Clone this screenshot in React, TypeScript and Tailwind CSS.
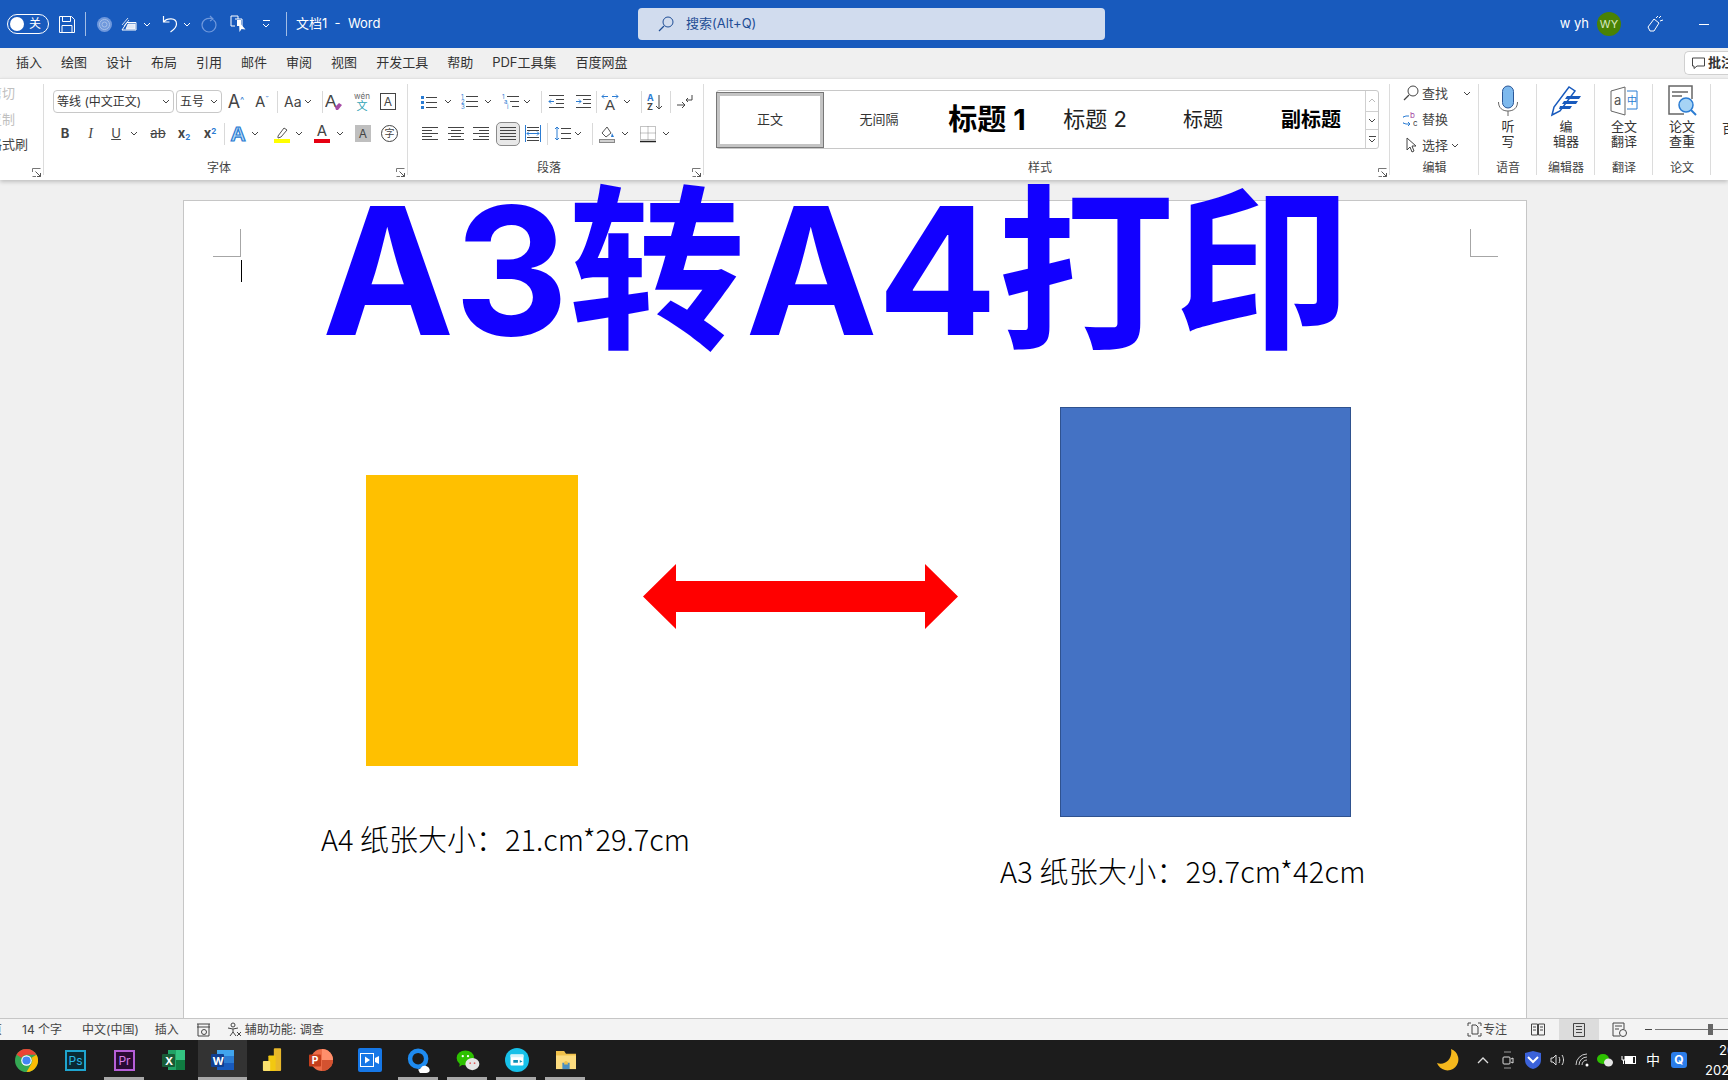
import React from "react";

const Chev = ({ c = "#444" }: { c?: string }) => (
  <svg width="8" height="5" viewBox="0 0 8 5" fill="none">
    <path d="M1 1l3 3 3-3" stroke={c} strokeWidth="1" />
  </svg>
);

const Sep = () => <div className="w-px h-[22px] bg-[#d9d9d9] shrink-0" />;

const Launcher = () => (
  <svg className="absolute right-[3px] bottom-[3px]" width="9" height="9" viewBox="0 0 9 9" fill="none">
    <path d="M.5 4V.5H8.5M.5 8.5H4" stroke="#777" />
    <path d="M3.5 3.5l5 5M8.5 5v3.5H5" stroke="#555" />
  </svg>
);

// one ribbon group: body, caption, and the thin divider on the right
const Group = ({ className, label, launcher, children }: { className: string; label?: string; launcher?: boolean; children: React.ReactNode }) => (
  <div className={`relative h-full shrink-0 flex flex-col ${className}`}>
    <div className="flex-1 min-h-0">{children}</div>
    <div className={`h-[23px] text-center text-[12px] leading-[22px] text-[#444] ${launcher ? "pr-[14px]" : ""}`}>{label}</div>
    {launcher && <Launcher />}
    <div className="absolute right-0 top-[5px] bottom-[5px] w-px bg-[#dcdcdc]" />
  </div>
);

const Lines = ({ x = 0, w = 14, ys, c = "#444" }: { x?: number; w?: number; ys: number[]; c?: string }) => (
  <>
    {ys.map((y) => (
      <path key={y} d={`M${x} ${y + 0.5}h${w}`} stroke={c} />
    ))}
  </>
);

const Ic = ({ children }: { children: React.ReactNode }) => (
  <svg className="shrink-0" width="18" height="18" viewBox="0 0 18 18" fill="none">
    {children}
  </svg>
);

const Align = ({ mode }: { mode: "l" | "c" | "r" | "j" }) => (
  <Ic>
    {[3, 6, 9, 12, 15].map((y, i) => {
      const short = i % 2 === 1 ? 10 : 16;
      const w = mode === "j" ? 16 : short;
      const x = mode === "r" ? 17 - w : mode === "c" ? 9 - w / 2 : 1;
      return <path key={y} d={`M${x} ${y - 0.5}h${w}`} stroke="#444" />;
    })}
  </Ic>
);

const Dropdown = ({ className, text }: { className: string; text: string }) => (
  <div className={`h-[23px] px-[3px] flex items-center justify-between border border-[#c8c8c8] rounded-[4px] text-[12px] text-[#333] bg-white shrink-0 ${className}`}>
    <span className="whitespace-nowrap">{text}</span>
    <Chev />
  </div>
);

const FontGroup = () => (
  <Group className="w-[364px]" label="字体" launcher>
    <div className="pl-[9px] pt-[11px] flex items-center h-[34px] text-[#444]">
      <Dropdown className="w-[121px]" text="等线 (中文正文)" />
      <div className="w-[2px]" />
      <Dropdown className="w-[46px]" text="五号" />
      <div className="w-[26px] ml-px text-center text-[18px] leading-none">A<sup className="text-[9px] text-[#2b7cd3]">^</sup></div>
      <div className="w-[26px] text-center text-[15px] leading-none">A<sup className="text-[9px] text-[#2b7cd3]">ˇ</sup></div>
      <div className="ml-[2px]"><Sep /></div>
      <div className="w-[24px] pl-[6px] text-[14px] whitespace-nowrap">Aa</div>
      <div className="w-[12px] flex justify-center"><Chev /></div>
      <div className="w-[8px]" />
      <Sep />
      <div className="w-[21px] flex justify-center">
        <Ic>
          <text x="0" y="14" fontSize="17" fill="#444" fontFamily="Liberation Sans">A</text>
          <path d="M10 14l4-4 3 2-4 5h-2z" fill="#a64ca6" />
        </Ic>
      </div>
      <div className="w-[36px] flex flex-col items-center text-[8px] leading-[9px] text-[#2ea3b5]">
        <span className="text-[#666]">wén</span>
        <span className="text-[11px] leading-[11px]">文</span>
      </div>
      <div className="w-[16px] h-[17px] border border-[#444] text-[12px] leading-[15px] text-center">A</div>
    </div>
    <div className="pl-[8px] pt-[7px] flex items-center h-[34px] text-[#444]">
      <div className="w-[26px] text-center text-[13px] font-bold">B</div>
      <div className="w-[25px] text-center text-[14px] italic font-['Liberation_Serif']">I</div>
      <div className="w-[26px] text-center text-[13px] underline">U</div>
      <div className="w-[10px] flex justify-center"><Chev /></div>
      <div className="w-[26px] ml-[6px] text-center text-[13px] line-through">ab</div>
      <div className="w-[26px] text-center text-[13px] font-bold">x<sub className="text-[8px] text-[#2b7cd3]">2</sub></div>
      <div className="w-[26px] text-center text-[13px] font-bold">x<sup className="text-[8px] text-[#2b7cd3]">2</sup></div>
      <div className="ml-px w-px h-[22px] bg-[#d9d9d9]" />
      <svg className="shrink-0" width="26" height="22" viewBox="0 0 26 22">
        <text x="13" y="18" textAnchor="middle" fontSize="21" fontWeight="700" fill="#bcdcf5" stroke="#2b7cd3" strokeWidth="1.200" fontFamily="Liberation Sans">A</text>
      </svg>
      <Chev />
      <div className="w-[18px] ml-[14px] shrink-0">
        <Ic>
          <path d="M5 11l6-8 3 2-6 7-3 1z" stroke="#555" />
          <rect x="1" y="14" width="16" height="4" fill="#ffff00" />
        </Ic>
      </div>
      <div className="w-[16px] flex justify-center"><Chev /></div>
      <div className="w-[16px] ml-[7px] flex flex-col items-center text-[15px] leading-[13px]">
        A
        <div className="w-[16px] h-[4px] mt-[2px] bg-[#e60012]" />
      </div>
      <div className="ml-[6px]"><Chev /></div>
      <div className="w-[16px] h-[17px] ml-[11px] bg-[#bfbfbf] text-[12px] leading-[17px] text-center">A</div>
      <div className="w-[17px] h-[17px] ml-[10px] rounded-full border border-[#444] text-[10px] leading-[15px] text-center">字</div>
    </div>
  </Group>
);

const ParagraphGroup = () => (
  <Group className="w-[296px]" label="段落" launcher>
    <div className="pl-[12px] pt-[11px] flex items-center h-[34px]">
      <Ic>
        <path d="M1 3h3v3H1zM1 8h3v3H1zM1 13h3v3H1z" fill="#2b7cd3" />
        <Lines x={6} w={11} ys={[4, 9, 14]} />
      </Ic>
      <div className="w-[20px] flex justify-center"><Chev /></div>
      <div className="ml-[3px]">
        <Ic>
          <text x="0" y="6" fontSize="6" fill="#2b7cd3">1</text>
          <text x="0" y="11" fontSize="6" fill="#2b7cd3">2</text>
          <text x="0" y="16" fontSize="6" fill="#2b7cd3">3</text>
          <Lines x={5} w={12} ys={[3, 8, 13]} />
        </Ic>
      </div>
      <div className="w-[18px] flex justify-center"><Chev /></div>
      <div className="ml-[5px]">
        <Ic>
          <text x="0" y="6" fontSize="6" fill="#2b7cd3">1</text>
          <text x="2" y="11" fontSize="6" fill="#2b7cd3">a</text>
          <text x="5" y="16" fontSize="6" fill="#2b7cd3">i</text>
          <path d="M5 3.500h12M8 8.500h9M10 13.500h7" stroke="#444" />
        </Ic>
      </div>
      <div className="w-[14px] flex justify-center"><Chev /></div>
      <div className="ml-[7px]"><Sep /></div>
      <div className="ml-[5px]">
        <Ic>
          <path d="M2 2.500h15M9 6.500h8M9 10.500h8M2 14.500h15" stroke="#444" />
          <path d="M7 8.500H2m2-2l-2 2 2 2" stroke="#2b7cd3" />
        </Ic>
      </div>
      <div className="ml-[9px]">
        <Ic>
          <path d="M2 2.500h15M9 6.500h8M9 10.500h8M2 14.500h15" stroke="#444" />
          <path d="M2 8.500h5m-2-2l2 2-2 2" stroke="#2b7cd3" />
        </Ic>
      </div>
      <div className="ml-[4px]"><Sep /></div>
      <div className="ml-[4px]">
        <Ic>
          <text x="9" y="17" textAnchor="middle" fontSize="15" fill="#444" fontFamily="Liberation Sans">A</text>
          <path d="M1 3.500h6M3 1.500l-2 2 2 2M11 3.500h6M15 1.500l2 2-2 2" stroke="#2b7cd3" />
        </Ic>
      </div>
      <div className="w-[16px] flex justify-center"><Chev /></div>
      <div className="ml-[6px]"><Sep /></div>
      <div className="ml-[4px]">
        <Ic>
          <text x="1" y="8" fontSize="9" fill="#2b7cd3" fontWeight="700">A</text>
          <text x="1" y="17" fontSize="9" fill="#444" fontWeight="700">Z</text>
          <path d="M13 2v14m-3-3l3 3 3-3" stroke="#444" />
        </Ic>
      </div>
      <div className="ml-[6px]"><Sep /></div>
      <div className="ml-[5px]">
        <Ic>
          <path d="M1 12h8m-3-3l3 3-3 3" stroke="#444" />
          <path d="M16 2v5H10m2-2l-2 2 2 2" stroke="#444" />
        </Ic>
      </div>
    </div>
    <div className="pl-[13px] pt-[7px] flex items-center h-[34px]">
      <Align mode="l" />
      <div className="ml-[8px]"><Align mode="c" /></div>
      <div className="ml-[7px]"><Align mode="r" /></div>
      <div className="w-[24px] h-[24px] ml-[6px] flex items-center justify-center bg-[#e8e8e8] border border-[#8a8a8a] rounded-[5px]"><Align mode="j" /></div>
      <div className="ml-[4px]">
        <Ic>
          <Lines x={3} w={12} ys={[2, 5, 12, 15]} c="#444" />
          <path d="M1.500 0v17M16.500 0v17" stroke="#2b7cd3" />
          <path d="M3 8.500h12M5 6.500l-2 2 2 2M13 6.500l2 2-2 2" stroke="#2b7cd3" />
        </Ic>
      </div>
      <div className="ml-[5px]"><Sep /></div>
      <div className="ml-[6px]">
        <Ic>
          <Lines x={7} w={10} ys={[3, 8, 13]} />
          <path d="M3 2v13M1 4l2-2 2 2M1 13l2 2 2-2" stroke="#2b7cd3" />
        </Ic>
      </div>
      <div className="w-[12px] flex justify-center"><Chev /></div>
      <div className="ml-[8px]"><Sep /></div>
      <div className="ml-[5px]">
        <Ic>
          <path d="M4 8l5-6 4 6-5 4z" stroke="#555" />
          <path d="M14 8l2 4h-3z" fill="#2b7cd3" />
          <rect x="1.500" y="14.500" width="15" height="3" fill="#d0d0d0" stroke="#888" />
        </Ic>
      </div>
      <div className="w-[18px] flex justify-center"><Chev /></div>
      <div className="ml-[5px]">
        <Ic>
          <path d="M1.500 1.500h15v13h-15zM9 1.500v13M1.500 8h15" stroke="#888" strokeDasharray="1 1" />
          <path d="M1 16.500h16" stroke="#222" strokeWidth="1.500" />
        </Ic>
      </div>
      <div className="w-[18px] flex justify-center"><Chev /></div>
    </div>
  </Group>
);

const styles = [
  { t: "正文", c: "w-[106px] mr-[2px] mt-[2px] mb-[1px] text-[13px] text-[#333] border-[3px] border-[#c4c4c4] outline outline-1 outline-[#777]" },
  { t: "无间隔", c: "w-[108px] text-[13px] text-[#333]" },
  { t: "标题 1", c: "w-[108px] text-[29px] font-bold text-black" },
  { t: "标题 2", c: "w-[108px] text-[22px] text-[#222]" },
  { t: "标题", c: "w-[108px] text-[20px] text-[#222]" },
  { t: "副标题", c: "w-[108px] text-[20px] font-bold text-black" },
];

const StylesGroup = () => (
  <Group className="w-[686px]" label="样式" launcher>
    <div className="pl-[12px] pt-[11px]">
      <div className="w-[663px] h-[59px] flex border border-[#c8c8c8] rounded-[3px]">
        {styles.map((s) => (
          <div key={s.t} className={`shrink-0 flex items-center justify-center whitespace-nowrap ${s.c}`}>
            {s.t}
          </div>
        ))}
        <div className="flex-1 flex flex-col border-l border-[#d0d0d0]">
          <div className="h-[20px] flex items-center justify-center rotate-180"><Chev c="#bbb" /></div>
          <div className="h-[19px] flex items-center justify-center border-y border-[#d0d0d0]"><Chev /></div>
          <div className="flex-1 flex flex-col items-center justify-center">
            <div className="w-[7px] h-px bg-[#444] mb-px" />
            <Chev />
          </div>
        </div>
      </div>
    </div>
  </Group>
);

const EditGroup = () => (
  <Group className="w-[89px]" label="编辑">
    <div className="pt-[1px] pl-[13px] text-[13px] leading-[26px] text-[#444]">
      <div className="flex items-center gap-[3px]">
        <svg width="16" height="16" viewBox="0 0 16 16" fill="none"><circle cx="10" cy="6" r="5" stroke="#444" /><path d="M6 10l-5 5" stroke="#444" strokeWidth="1.300" /></svg>
        查找
        <span className="ml-[12px]"><Chev /></span>
      </div>
      <div className="flex items-center gap-[3px]">
        <svg width="16" height="16" viewBox="0 0 16 16" fill="none">
          <text x="7" y="7" fontSize="8" fill="#a64ca6">b</text>
          <text x="10" y="15" fontSize="8" fill="#444">c</text>
          <path d="M6 5H3a2 2 0 000 8h4M5 11l2 2-2 2" stroke="#2b7cd3" />
        </svg>
        替换
      </div>
      <div className="flex items-center gap-[3px]">
        <svg width="16" height="16" viewBox="0 0 16 16" fill="none"><path d="M4 1v12l3-3 2 5 2-1-2-5h4z" stroke="#444" /></svg>
        选择
        <Chev />
      </div>
    </div>
  </Group>
);

// tall buttons on the right of the ribbon: icon on top, two lines of text under it
const BigButton = ({ label, l1, l2, className, children }: { label: string; l1: string; l2: string; className: string; children: React.ReactNode }) => (
  <Group className={className} label={label}>
    <div className="flex flex-col items-center pt-[6px] text-[13px] leading-[15px] text-[#333]">
      <div className="h-[32px] flex items-center justify-center mb-[2px]">{children}</div>
      <div>{l1}</div>
      <div>{l2}</div>
    </div>
  </Group>
);

const TitleBar = () => (
  <div className="h-[48px] bg-[#185abd] flex items-center text-white shrink-0">
    <div className="ml-[7px] w-[42px] h-[20px] rounded-full border border-white flex items-center px-[2px] gap-[5px] shrink-0">
      <div className="w-[14px] h-[14px] rounded-full bg-white" />
      <span className="text-[12px] leading-none">关</span>
    </div>
    <svg className="ml-[10px]" width="16" height="17" viewBox="0 0 16 17" fill="none">
      <path d="M.5.500h12l3 3v13H.5zM3.500.500v5h8v-5M3 16.500v-7h10v7" stroke="#fff" />
    </svg>
    <div className="w-px h-[24px] bg-white/60 ml-[10px]" />
    <svg className="ml-[11px]" width="15" height="15" viewBox="0 0 15 15" fill="none">
      <circle cx="7.500" cy="7.500" r="7.500" fill="#6f98dc" />
      <circle cx="7.500" cy="7.500" r="5" stroke="#a5c0ea" />
      <circle cx="7.500" cy="7.500" r="2.500" stroke="#a5c0ea" />
    </svg>
    <svg className="ml-[9px]" width="16" height="14" viewBox="0 0 16 14" fill="none">
      <path d="M1 13h14V5.500H6z" stroke="#fff" />
      <path d="M5 12h9V7H7zM1 8l6-7M3 9l5-6" stroke="#fff" fill="#dfe8f7" strokeWidth=".8" />
    </svg>
    <span className="ml-[6px]"><Chev c="#fff" /></span>
    <svg className="ml-[11px]" width="16" height="18" viewBox="0 0 16 18" fill="none">
      <path d="M1.500 1v6h6M1.500 7c3-4 13-5 13 2 0 3-3 6-6 8" stroke="#fff" strokeWidth="1.200" />
    </svg>
    <span className="ml-[5px]"><Chev c="#fff" /></span>
    <svg className="ml-[10px]" width="16" height="18" viewBox="0 0 16 18" fill="none">
      <path d="M9 1l3 3-3 2M11 3.500C5 2.500 1 5.500 1 10a7 7 0 0014 0c0-2-1-4-2.500-5" stroke="#6f98dc" strokeWidth="1.200" />
    </svg>
    <svg className="ml-[13px]" width="16" height="18" viewBox="0 0 16 18" fill="none">
      <path d="M5 11H1V1h7v3M5 4h7v8" stroke="#fff" />
      <path d="M7 5h4v6H7z" fill="#fff" />
      <path d="M9 7l.500 10 2-3 4 .500z" fill="#fff" />
    </svg>
    <div className="ml-[16px] flex flex-col items-center gap-[2px]">
      <div className="w-[7px] h-px bg-white" />
      <Chev c="#fff" />
    </div>
    <div className="w-px h-[24px] bg-white/60 ml-[16px]" />
    <span className="ml-[9px] w-[84px] text-[13px] whitespace-pre">文档1  -  Word</span>
    <div className="ml-[258px] w-[467px] h-[32px] rounded-[4px] bg-[#d1dcee] flex items-center pl-[19px] text-[#1f4e96] text-[13px] shrink-0">
      <svg width="18" height="18" viewBox="0 0 18 18" fill="none"><circle cx="11" cy="7" r="5" stroke="#1f4e96" /><path d="M7 11l-5 5" stroke="#1f4e96" strokeWidth="1.300" /></svg>
      <span className="ml-[11px]">搜索(Alt+Q)</span>
    </div>
    <div className="ml-auto flex items-center shrink-0">
      <span className="text-[13px]">w yh</span>
      <div className="ml-[8px] w-[24px] h-[24px] rounded-full bg-[#498205] text-[11px] text-[#d8e8c0] flex items-center justify-center">WY</div>
      <svg className="ml-[25px]" width="18" height="18" viewBox="0 0 18 18" fill="none">
        <path d="M2 12l6-8 5 4-5 8H4zM10 3l2-2M14 6l3-1M13 3l2-2" stroke="#fff" />
      </svg>
      <div className="ml-[35px] mr-[19px] w-[10px] h-px bg-white" />
    </div>
  </div>
);

const TabRow = () => (
  <div className="h-[30px] bg-[#f0f0f0] flex items-center pl-[16px] gap-[19px] text-[13px] text-[#333] shrink-0 overflow-hidden">
    {["插入", "绘图", "设计", "布局", "引用", "邮件", "审阅", "视图", "开发工具", "帮助", "PDF工具集", "百度网盘"].map((t) => (
      <span key={t} className="whitespace-nowrap">{t}</span>
    ))}
    <div className="ml-auto w-[44px] h-[24px] bg-white border border-r-0 border-[#d0d0d0] rounded-l-[5px] flex items-center pl-[7px] gap-[3px] shrink-0 overflow-hidden">
      <svg className="shrink-0" width="13" height="12" viewBox="0 0 13 12" fill="none"><path d="M.5 1h12v8H5l-3 2.500V9H.5z" stroke="#444" /></svg>
      <span className="font-bold whitespace-nowrap">批注</span>
    </div>
  </div>
);

const Ribbon = () => (
  <div className="h-[102px] bg-white border-t border-[#e2e2e2] flex shadow-[0_2px_4px_rgba(0,0,0,0.2)] shrink-0 relative z-10 overflow-hidden">
    <Group className="w-[44px]" launcher>
      <div className="flex flex-col items-start -ml-[11px] pt-[2px] text-[13px] leading-[25.500px] whitespace-nowrap">
        <span className="text-[#c0c0c0]">剪切</span>
        <span className="text-[#c0c0c0]">复制</span>
        <span className="text-[#444]">格式刷</span>
      </div>
    </Group>
    <FontGroup />
    <ParagraphGroup />
    <StylesGroup />
    <EditGroup />
    <BigButton className="w-[58px]" label="语音" l1="听" l2="写">
      <svg width="22" height="32" viewBox="0 0 22 32" fill="none">
        <rect x="5.500" y="1" width="11" height="22" rx="5.500" fill="#7db9ee" stroke="#2b5797" />
        <path d="M1.500 17c0 6 4 9 9.500 9s9.500-3 9.500-9M11 26v5" stroke="#666" />
      </svg>
    </BigButton>
    <BigButton className="w-[58px]" label="编辑器" l1="编" l2="辑器">
      <svg width="32" height="32" viewBox="0 0 32 32" fill="none">
        <path d="M2 30l2-8L19 2l6 4L10 26z" stroke="#185abd" strokeWidth="1.500" />
        <path d="M17 11h14l-2 3H15zM14 16h14l-2 3H12zM10 21h12l-2 3H9z" fill="#185abd" />
      </svg>
    </BigButton>
    <BigButton className="w-[58px]" label="翻译" l1="全文" l2="翻译">
      <svg width="28" height="30" viewBox="0 0 28 30" fill="none">
        <path d="M1 5l14-4v28L1 25z" stroke="#666" fill="#fff" />
        <text x="4" y="19" fontSize="13" fill="#555">a</text>
        <path d="M17 5h10v18H17" stroke="#2b7cd3" />
        <text x="17" y="18" fontSize="10" fill="#2b7cd3">中</text>
      </svg>
    </BigButton>
    <BigButton className="w-[58px]" label="论文" l1="论文" l2="查重">
      <svg width="30" height="32" viewBox="0 0 30 32" fill="none">
        <path d="M17 29H2V1h23v13" stroke="#666" strokeWidth="1.500" />
        <path d="M5 7h16M5 11h10" stroke="#666" strokeWidth="1.500" />
        <circle cx="19" cy="20" r="7" fill="#a6d3f5" stroke="#2b7cd3" strokeWidth="1.500" />
        <path d="M24 25l5 5" stroke="#2b7cd3" strokeWidth="2" />
      </svg>
    </BigButton>
    <div className="flex-1 overflow-hidden pl-[11px] pt-[40px] text-[13px] text-[#333] whitespace-nowrap">百</div>
  </div>
);

const Page = () => (
  <div className="flex-1 min-h-0 bg-[#f0f0f0] overflow-hidden pl-[183px] pt-[20px]">
    <div className="relative w-[1344px] h-[1000px] bg-white border border-[#c6c6c6]">
      <div className="absolute left-[29px] top-[28px] w-[28px] h-[28px] border-r border-b border-[#a6a6a6]" />
      <div className="absolute left-[1286px] top-[28px] w-[28px] h-[28px] border-l border-b border-[#a6a6a6]" />
      <div className="absolute left-[57px] top-[59px] w-px h-[22px] bg-black" />
      <div className="absolute left-[138px] top-[-70px] text-[177px] leading-[280px] font-bold text-[#1200ff] whitespace-nowrap">A3转A4打印</div>
      <div className="absolute left-[182px] top-[274px] w-[212px] h-[291px] bg-[#ffc000]" />
      <svg className="absolute left-[459px] top-[363px]" width="315" height="65" viewBox="0 0 315 65">
        <path d="M0 32.500L33 0v17h249V0l33 32.500L282 65V48H33v17z" fill="#ff0000" />
      </svg>
      <div className="absolute left-[876px] top-[206px] w-[291px] h-[410px] bg-[#4472c4] border border-[#2f528f]" />
      <div className="absolute left-[137px] top-[615px] text-[29px] leading-[44px] font-light text-black whitespace-nowrap font-['Noto_Sans_CJK_SC',sans-serif]">A4 纸张大小：21.cm*29.7cm</div>
      <div className="absolute left-[816px] top-[647px] text-[29px] leading-[44px] tracking-[0.2px] font-light text-black whitespace-nowrap font-['Noto_Sans_CJK_SC',sans-serif]">A3 纸张大小：29.7cm*42cm</div>
    </div>
  </div>
);

const StatusBar = () => (
  <div className="h-[22px] bg-[#f3f3f3] border-t border-[#c6c6c6] flex items-center text-[12px] text-[#444] shrink-0 overflow-hidden">
    <span className="-ml-[10px] w-[32px]">页</span>
    <span>14 个字</span>
    <span className="ml-[20px]">中文(中国)</span>
    <span className="ml-[16px]">插入</span>
    <svg className="ml-[17px]" width="15" height="14" viewBox="0 0 15 14" fill="none"><path d="M1 1h13M1 4h13M2 1v12h11V1" stroke="#444" /><circle cx="8" cy="9" r="2.500" stroke="#444" /></svg>
    <svg className="ml-[16px]" width="15" height="15" viewBox="0 0 15 15" fill="none"><circle cx="6" cy="3" r="2" stroke="#444" /><path d="M1 6l5 1 5-1M6 7v3l-3 4M6 10l3 4M10 10l4 4M14 10l-4 4" stroke="#444" /></svg>
    <span className="ml-[3px]">辅助功能: 调查</span>
    <div className="ml-auto flex items-center h-full">
      <svg width="15" height="15" viewBox="0 0 15 15" fill="none"><path d="M1 4V1h3M11 1h3v3M14 11v3h-3M4 14H1v-3M5 3h4l2 2v7H5z" stroke="#444" /></svg>
      <span className="ml-[1px] w-[41px]">专注</span>
      <svg className="ml-[7px]" width="14" height="13" viewBox="0 0 14 13" fill="none"><path d="M.5 1h6v11h-6zM7.500 1h6v11h-6zM2 4h3M2 7h3M9 4h3M9 7h3" stroke="#444" /></svg>
      <div className="ml-[14px] w-[40px] h-full bg-[#dcdcdc] flex items-center justify-center">
        <svg width="12" height="14" viewBox="0 0 12 14" fill="none"><path d="M.5.500h11v13H.5zM3 3.500h6M3 6.500h6M3 9.500h6" stroke="#444" /></svg>
      </div>
      <svg className="ml-[13px]" width="15" height="15" viewBox="0 0 15 15" fill="none"><path d="M8 14H1V1h11v6M3 4h7M3 7h4" stroke="#444" /><circle cx="11" cy="11" r="3.500" stroke="#444" /></svg>
      <div className="ml-[18px] w-[7px] h-px bg-[#444]" />
      <div className="ml-[3px] w-[73px] h-px bg-[#777] relative">
        <div className="absolute left-[53px] -top-[5px] w-[5px] h-[11px] bg-[#666]" />
      </div>
    </div>
  </div>
);

const apps: { key: string; on?: boolean; active?: boolean; icon: React.ReactNode }[] = [
  {
    key: "chrome",
    icon: (
      <svg width="23" height="23" viewBox="0 0 24 24">
        <circle cx="12" cy="12" r="12" fill="#34a853" />
        <path d="M12 0a12 12 0 0110.400 6H12a6 6 0 00-5.200 3L1.600 6A12 12 0 0112 0z" fill="#ea4335" />
        <path d="M22.400 6A12 12 0 0112 24l5.200-9a6 6 0 000-6z" fill="#fbbc05" />
        <circle cx="12" cy="12" r="5.500" fill="#fff" />
        <circle cx="12" cy="12" r="4.300" fill="#4285f4" />
      </svg>
    ),
  },
  { key: "ps", icon: <div className="w-[21px] h-[21px] bg-[#0a2a33] border-2 border-[#1fa5cf] text-[#29b6e6] text-[12px] leading-[17px] text-center">Ps</div> },
  { key: "pr", on: true, icon: <div className="w-[21px] h-[21px] bg-[#2a0a33] border-2 border-[#b75fd8] text-[#d77ce8] text-[12px] leading-[17px] text-center">Pr</div> },
  {
    key: "excel",
    icon: (
      <svg width="24" height="24" viewBox="0 0 24 24">
        <path d="M6 2h17v20H6z" fill="#21a366" />
        <path d="M14 2h9v10h-9z" fill="#33c481" />
        <path d="M14 12h9v10h-9z" fill="#107c41" />
        <rect y="6" width="13" height="13" rx="1" fill="#185c37" />
        <text x="3" y="16.500" fontSize="11" fontWeight="700" fill="#fff">X</text>
      </svg>
    ),
  },
  {
    key: "word",
    on: true,
    active: true,
    icon: (
      <svg width="24" height="24" viewBox="0 0 24 24">
        <path d="M6 2h17v20H6z" fill="#2b7cd3" />
        <path d="M6 2h17v6H6z" fill="#41a5ee" />
        <path d="M6 15h17v7H6z" fill="#185abd" />
        <rect y="6" width="13" height="13" rx="1" fill="#103f91" />
        <text x="1.500" y="16.500" fontSize="11" fontWeight="700" fill="#fff">W</text>
      </svg>
    ),
  },
  {
    key: "bi",
    icon: (
      <svg width="20" height="24" viewBox="0 0 22 26">
        <rect x="13" width="8" height="25" rx="1" fill="#e8b72a" />
        <rect x="7" y="8" width="8" height="17" rx="1" fill="#f2c811" />
        <rect x="1" y="14" width="8" height="11" rx="1" fill="#fbe26d" />
      </svg>
    ),
  },
  {
    key: "ppt",
    icon: (
      <svg width="24" height="24" viewBox="0 0 26 26">
        <circle cx="14" cy="13" r="12" fill="#ed6c47" />
        <path d="M14 1a12 12 0 0112 12H14z" fill="#ff8f6b" />
        <path d="M14 13h12a12 12 0 01-12 12z" fill="#d35230" />
        <rect y="7" width="13" height="13" rx="1" fill="#c43e1c" />
        <text x="3" y="17.500" fontSize="11" fontWeight="700" fill="#fff">P</text>
      </svg>
    ),
  },
  {
    key: "video",
    icon: (
      <div className="w-[24px] h-[24px] rounded-[2px] bg-[#1677e6] flex items-center justify-center">
        <svg width="20" height="14" viewBox="0 0 20 14"><rect x=".5" y=".5" width="13" height="13" fill="none" stroke="#fff" /><path d="M5 3.500l5 3.500-5 3.500z" fill="#fff" /><path d="M15 5l4-2v8l-4-2z" fill="#fff" /></svg>
      </div>
    ),
  },
  {
    key: "q",
    on: true,
    icon: (
      <svg width="24" height="25" viewBox="0 0 26 28" fill="none">
        <circle cx="12" cy="12" r="9" stroke="#1e8bf0" strokeWidth="5" />
        <path d="M12 24c4 0 3-4 7-4s6 3 6 5-2 3-4 3h-7z" fill="#fff" />
      </svg>
    ),
  },
  {
    key: "wechat",
    on: true,
    icon: (
      <svg width="24" height="21" viewBox="0 0 26 24">
        <ellipse cx="10" cy="9" rx="10" ry="8.500" fill="#2dc100" />
        <path d="M4 14l-1 5 5-3z" fill="#2dc100" />
        <ellipse cx="18" cy="16" rx="8" ry="7" fill="#e5e5e5" />
        <circle cx="7" cy="7" r="1.300" fill="#fff" />
        <circle cx="13" cy="7" r="1.300" fill="#fff" />
        <circle cx="15.500" cy="15" r="1" fill="#e06060" />
        <circle cx="20.500" cy="15" r="1" fill="#e06060" />
      </svg>
    ),
  },
  {
    key: "share",
    on: true,
    icon: (
      <svg width="24" height="24" viewBox="0 0 26 26">
        <circle cx="13" cy="13" r="13" fill="#17c0e8" />
        <rect x="6" y="7" width="14" height="12" rx="1" fill="#fff" />
        <rect x="6" y="7" width="14" height="3" fill="#d3f3fa" />
        <path d="M9 13h5v3H9zM16 13l3 1.500-3 1.500z" fill="#0b8fb5" />
      </svg>
    ),
  },
  {
    key: "folder",
    on: true,
    icon: (
      <svg width="22" height="20" viewBox="0 0 24 22">
        <path d="M1 1h9l2 3h11v17H1z" fill="#f0c14b" />
        <path d="M1 6h22v15H1z" fill="#fcdc7f" />
        <path d="M8 14h8v7H8z" fill="#4a8fc2" />
        <path d="M10 14a2 2 0 014 0v2h-4z" fill="#f0c14b" />
      </svg>
    ),
  },
];

const Taskbar = () => (
  <div className="h-[40px] bg-[#1c1c1c] flex items-center pl-[2px] shrink-0 overflow-hidden">
    {apps.map((a) => (
      <div key={a.key} className={`relative w-[49px] h-full flex items-center justify-center shrink-0 ${a.active ? "bg-[#333333]" : ""}`}>
        {a.icon}
        {a.on && <div className={`absolute bottom-0 h-[3px] bg-[#a8a8a8] ${a.active ? "left-0 right-0" : "left-[4px] right-[5px]"}`} />}
      </div>
    ))}
    <div className="ml-auto flex items-center h-full text-white shrink-0">
      <svg width="24" height="24" viewBox="0 0 24 24"><path d="M15 1A11 11 0 111 15c8 3 16-4 14-14z" fill="#f5b81d" /></svg>
      <svg className="ml-[17px]" width="12" height="8" viewBox="0 0 12 8" fill="none"><path d="M1 7l5-5 5 5" stroke="#ddd" strokeWidth="1.300" /></svg>
      <svg className="ml-[13px]" width="12" height="18" viewBox="0 0 12 18" fill="none"><path d="M2 1h7M2 17h7" stroke="#999" /><rect x="1" y="6" width="7" height="7" rx="1" stroke="#ddd" /><path d="M9 8l2-1v5l-2-1" stroke="#ddd" /></svg>
      <svg className="ml-[11px]" width="16" height="18" viewBox="0 0 16 18"><path d="M8 0l8 2v7c0 5-4 8-8 9-4-1-8-4-8-9V2z" fill="#3b62d9" /><path d="M3 6l5 5 5-5" stroke="#fff" strokeWidth="2" fill="none" /></svg>
      <svg className="ml-[9px]" width="16" height="14" viewBox="0 0 16 14" fill="none"><path d="M1 5v4h2l3 3V2L3 5zM9 4c1 2 1 4 0 6M12 2c2 3 2 7 0 10" stroke="#ddd" /></svg>
      <svg className="ml-[9px]" width="14" height="14" viewBox="0 0 14 14" fill="none"><path d="M1 12a11 11 0 0111-11M4 12a8 8 0 018-8M7 12a5 5 0 015-5" stroke="#ccc" /><circle cx="12" cy="12" r="1.500" fill="#fff" /></svg>
      <svg className="ml-[8px]" width="16" height="14" viewBox="0 0 16 14"><ellipse cx="6" cy="6" rx="6" ry="5" fill="#2dc100" /><ellipse cx="11.500" cy="9.500" rx="4.500" ry="4" fill="#e5e5e5" /></svg>
      <svg className="ml-[8px]" width="16" height="12" viewBox="0 0 16 12" fill="none"><rect x="4.500" y="2.500" width="10" height="7" stroke="#fff" /><rect x="5" y="3" width="7" height="6" fill="#fff" /><path d="M1 2v4h3V2M2.500 6v4" stroke="#fff" /></svg>
      <span className="ml-[9px] w-[15px] text-[14px] leading-none">中</span>
      <div className="ml-[10px] w-[16px] h-[16px] rounded-[3px] bg-[#2b7de9] text-[12px] font-bold leading-[16px] text-center">Q</div>
      <div className="ml-[18px] w-[23px] text-[13px] leading-[20px] overflow-hidden whitespace-nowrap">
        <div className="pl-[14px]">20</div>
        <div>2022</div>
      </div>
    </div>
  </div>
);

export default function App() {
  return (
    <div className="w-[1728px] h-[1080px] flex flex-col overflow-hidden font-['Inter','Noto_Sans_CJK_SC',sans-serif]">
      <TitleBar />
      <TabRow />
      <Ribbon />
      <Page />
      <StatusBar />
      <Taskbar />
    </div>
  );
}
